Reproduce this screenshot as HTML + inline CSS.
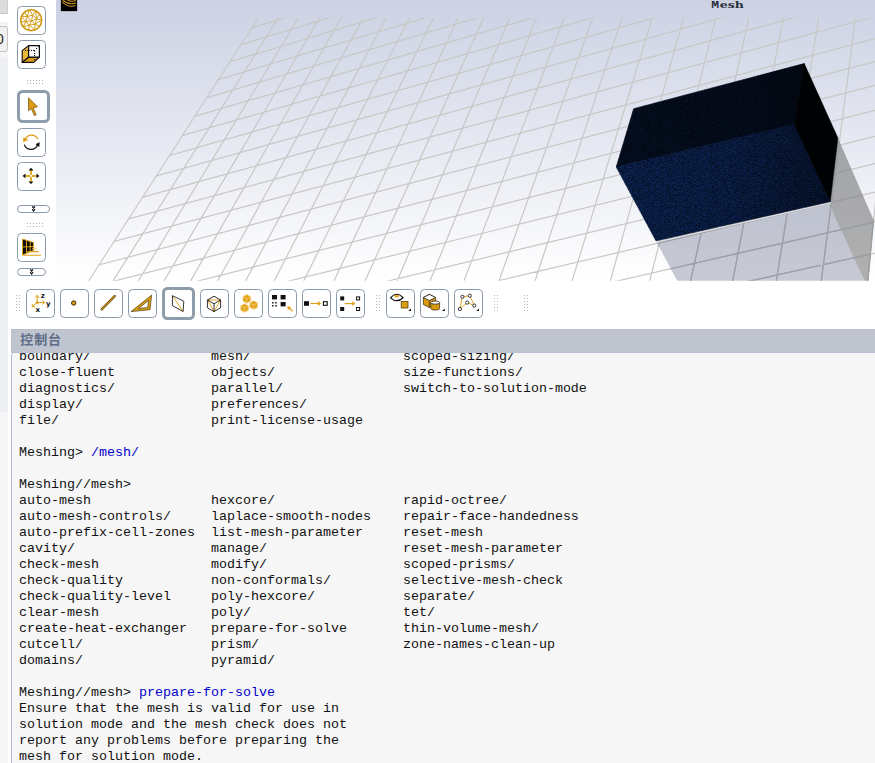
<!DOCTYPE html>
<html lang="zh">
<head>
<meta charset="utf-8">
<title>Fluent Meshing</title>
<style>
html,body{margin:0;padding:0;background:#fff;}
body{width:875px;height:763px;overflow:hidden;position:relative;font-family:"Liberation Sans","Noto Sans CJK SC",sans-serif;}
#top{position:absolute;left:0;top:0;width:875px;height:329px;display:block;}
#strip{position:absolute;left:0;top:0;width:8px;height:412px;background:#eeeff2;}
#strip .a{position:absolute;left:0;top:0;width:7px;height:13px;background:#dcdcdc;border-right:1px solid #cfcfcf;border-bottom:1px solid #c6c6c6;}
#strip .b{position:absolute;left:0;top:14px;width:8px;height:8px;background:#fff;}
#strip .c{position:absolute;left:0;top:22px;width:8px;height:35px;background:#f4f4f4;}
#strip .d{position:absolute;left:-6px;top:26px;width:12px;height:24px;border:1px solid #c4c4c4;border-radius:3px;background:#f1f1f1;font-size:15px;line-height:23px;color:#333;overflow:hidden;text-indent:0.6px;}
#conhead{position:absolute;left:11px;top:329px;width:864px;height:24px;box-sizing:border-box;border-top:1px solid #babfca;border-bottom:1px solid #b8c2d2;background:#c0c4ce;color:#5d6d87;font-weight:bold;font-size:13px;letter-spacing:0.9px;line-height:23px;font-family:"Liberation Sans","Noto Sans CJK SC",sans-serif;}
#conhead span{position:absolute;left:9.3px;top:-2px;}
#conbody{position:absolute;left:11px;top:353px;width:864px;height:410px;background:#f6f6f6;overflow:hidden;border-left:1px solid #b0bccc;box-sizing:border-box;border-top-left-radius:3px;}
#conbody pre{position:absolute;left:7px;top:-4px;margin:0;font-family:"Liberation Mono","Noto Sans CJK SC",monospace;font-size:13.333px;line-height:16px;color:#111;white-space:pre;}
#conbody pre b{font-weight:normal;color:#0000cd;}
</style>
</head>
<body>
<div style="position:absolute;left:0;top:412px;width:8px;height:351px;background:#f6f6f6"></div>
<div id="strip"><div class="a"></div><div class="b"></div><div class="c"></div><div class="d">0</div></div>
<svg id="top" width="875" height="329" viewBox="0 0 875 329">
<defs>
<linearGradient id="bg" x1="0" y1="0" x2="0" y2="1"><stop offset="0" stop-color="#ccd2e4"/><stop offset="1" stop-color="#ffffff"/></linearGradient>
<clipPath id="gclip"><polygon points="257.4,17.8 875,17.8 875,281.5 87.4,281.5"/></clipPath>
<clipPath id="sclip"><polygon points="656,240.8 676.1,281 868.5,281 873.9,220.6 837.9,138.1 830.3,201.5"/></clipPath>
<clipPath id="vclip"><rect x="56" y="0" width="819" height="280.7"/></clipPath>
<filter id="nz" x="0" y="0" width="1" height="1" color-interpolation-filters="sRGB">
<feTurbulence type="fractalNoise" baseFrequency="1.2" numOctaves="2" seed="7" result="n"/>
<feColorMatrix in="n" type="matrix" values="0 0 0 0 0  0 0 0 0 0  0 0 0 0 0  1.6 0 0 0 -0.48" result="a"/>
<feComposite in="a" in2="SourceGraphic" operator="in" result="b"/>
<feMerge><feMergeNode in="SourceGraphic"/><feMergeNode in="b"/></feMerge>
</filter>
<linearGradient id="dk" gradientUnits="userSpaceOnUse" x1="616" y1="0" x2="835" y2="0"><stop offset="0" stop-color="#000" stop-opacity="0"/><stop offset="0.55" stop-color="#000" stop-opacity="0.1"/><stop offset="1" stop-color="#000" stop-opacity="0.45"/></linearGradient>
</defs>
<g clip-path="url(#vclip)">
<rect x="56" y="0" width="819" height="281" fill="url(#bg)"/>
<g clip-path="url(#gclip)"><path d="M260.1 14.8L86.3 284.5M280.1 14.8L110.9 284.5M300.5 14.8L136.1 284.5M321.5 14.8L161.9 284.5M343.0 14.8L188.5 284.5M365.1 14.8L215.7 284.5M387.8 14.8L243.7 284.5M411.1 14.8L272.4 284.5M435.1 14.8L302.0 284.5M459.7 14.8L332.3 284.5M485.0 14.8L363.5 284.5M511.0 14.8L395.6 284.5M537.8 14.8L428.6 284.5M565.4 14.8L462.6 284.5M593.8 14.8L497.7 284.5M623.1 14.8L533.8 284.5M653.2 14.8L571.0 284.5M684.4 14.8L609.3 284.5M716.5 14.8L648.9 284.5M749.6 14.8L689.8 284.5M783.9 14.8L732.0 284.5M819.3 14.8L775.7 284.5M855.9 14.8L820.8 284.5M893.7 14.8L867.5 284.5M932.9 14.8L915.8 284.5M50 90.2L880 -165.6M50 103.0L880 -150.3M50 116.1L880 -134.4M50 129.8L880 -118.0M50 143.9L880 -101.0M50 158.5L880 -83.4M50 173.7L880 -65.1M50 189.4L880 -46.2M50 205.7L880 -26.6M50 222.7L880 -6.1M50 240.3L880 15.1M50 258.6L880 37.2M50 277.7L880 60.2M50 297.6L880 84.1M50 318.3L880 109.1M50 340.0L880 135.2M50 362.6L880 162.4M50 386.3L880 190.9M50 411.0L880 220.8M50 437.0L880 252.0M50 464.2L880 284.9" fill="none" stroke="#c7c7c4" stroke-width="1.2"/></g>
<!-- shadow -->
<polygon points="656,240.8 677.3,281 864.6,281 832.4,211.7 830.3,201.5" fill="#66708a" fill-opacity="0.37"/>
<polygon points="837.9,138.1 873.9,220.6 868.5,281 864.6,281 832.4,211.7 830.3,201.5" fill="#505050" fill-opacity="0.45"/>
<g clip-path="url(#sclip)"><path d="M260.1 14.8L86.3 284.5M280.1 14.8L110.9 284.5M300.5 14.8L136.1 284.5M321.5 14.8L161.9 284.5M343.0 14.8L188.5 284.5M365.1 14.8L215.7 284.5M387.8 14.8L243.7 284.5M411.1 14.8L272.4 284.5M435.1 14.8L302.0 284.5M459.7 14.8L332.3 284.5M485.0 14.8L363.5 284.5M511.0 14.8L395.6 284.5M537.8 14.8L428.6 284.5M565.4 14.8L462.6 284.5M593.8 14.8L497.7 284.5M623.1 14.8L533.8 284.5M653.2 14.8L571.0 284.5M684.4 14.8L609.3 284.5M716.5 14.8L648.9 284.5M749.6 14.8L689.8 284.5M783.9 14.8L732.0 284.5M819.3 14.8L775.7 284.5M855.9 14.8L820.8 284.5M893.7 14.8L867.5 284.5M932.9 14.8L915.8 284.5M50 90.2L880 -165.6M50 103.0L880 -150.3M50 116.1L880 -134.4M50 129.8L880 -118.0M50 143.9L880 -101.0M50 158.5L880 -83.4M50 173.7L880 -65.1M50 189.4L880 -46.2M50 205.7L880 -26.6M50 222.7L880 -6.1M50 240.3L880 15.1M50 258.6L880 37.2M50 277.7L880 60.2M50 297.6L880 84.1M50 318.3L880 109.1M50 340.0L880 135.2M50 362.6L880 162.4M50 386.3L880 190.9M50 411.0L880 220.8M50 437.0L880 252.0M50 464.2L880 284.9" fill="none" stroke="#9c9fa4" stroke-width="1.2"/></g>
<path d="M656.6 242L830.9 202.7" stroke="#dcdcdc" stroke-width="1.3" fill="none"/>
<!-- box -->
<polygon points="633.7,108.7 804.2,63.6 794.1,124.3 616.3,167" fill="#061229" stroke="#061229" stroke-width="0.6" filter="url(#nz)"/>
<polygon points="616.3,167 794.1,124.3 830.3,201.5 656,240.8" fill="#0e2960" stroke="#0a1f4a" stroke-width="0.6" filter="url(#nz)"/>
<polygon points="633.7,108.7 804.2,63.6 794.1,124.3 830.3,201.5 656,240.8 616.3,167" fill="url(#dk)"/>
<polygon points="804.2,63.6 837.9,138.1 830.3,201.5 794.1,124.3" fill="#000103" stroke="#000103" stroke-width="0.6"/>
<!-- logo -->
<rect x="60.5" y="-0.5" width="17" height="12" fill="#000" stroke="#e4e8f4" stroke-opacity="0.6" stroke-width="1"/>
<path d="M62 1.5C66 6 70 7.5 75.5 5.5M62.5 -0.5C66 3.5 70 5 76 3M66 -1C69 1.5 72 2 76 0.5" fill="none" stroke="#c8921a" stroke-width="1.1"/>
<text transform="translate(711.2,7.5) scale(1.25,1)" font-weight="bold" fill="#2a2f3a"><tspan font-family="'Liberation Mono',monospace" font-size="10.5">M</tspan><tspan font-family="'DejaVu Serif','Liberation Serif',serif" font-size="10" x="6.8 13.2 18.8">esh</tspan></text>
</g>
<!-- left toolbar -->
<g fill="#fff" stroke="#8b9aaa" stroke-width="1">
<rect x="17.5" y="6.5" width="28" height="28" rx="4"/>
<rect x="17.5" y="40.5" width="28" height="28" rx="4"/>
<rect x="17.5" y="128.5" width="28" height="28" rx="4"/>
<rect x="17.5" y="162.5" width="28" height="28" rx="4"/>
<rect x="17.5" y="233.5" width="28" height="28" rx="4"/>
<rect x="17.5" y="205.5" width="32" height="7" rx="3.5"/>
<rect x="17.5" y="268.5" width="28" height="7" rx="3.5"/>
</g>
<rect x="18.5" y="91.5" width="30" height="30" rx="4" fill="#fff" stroke="#8f9dab" stroke-width="3"/>
<g fill="#b4b4b4">
<path d="M27 80h1v1h-1zM30 80h1v1h-1zM33 80h1v1h-1zM36 80h1v1h-1zM39 80h1v1h-1zM42 80h1v1h-1zM27 83h1v1h-1zM30 83h1v1h-1zM33 83h1v1h-1zM36 83h1v1h-1zM39 83h1v1h-1zM42 83h1v1h-1z"/>
<path d="M27 223h1v1h-1zM30 223h1v1h-1zM33 223h1v1h-1zM36 223h1v1h-1zM39 223h1v1h-1zM42 223h1v1h-1zM27 226h1v1h-1zM30 226h1v1h-1zM33 226h1v1h-1zM36 226h1v1h-1zM39 226h1v1h-1zM42 226h1v1h-1z"/>
</g>
<!-- sphere icon -->
<g fill="none" stroke="#d19a14" stroke-linejoin="round">
<circle cx="31.2" cy="20.2" r="10.4" stroke-width="1.6"/>
<path stroke-width="0.95" d="M31.6 21L36.6 18.9M31.6 21L32.6 15.2M31.6 21L27.2 16.5M31.6 21L25.8 21.5M31.6 21L29.3 25.1M31.6 21L34.8 24.2M36.6 18.9L32.6 15.2L27.2 16.5L25.8 21.5L29.3 25.1L34.8 24.2ZM36.6 18.9L39.6 14.3M36.6 18.9L41.5 20.2M36.6 18.9L35.6 10.9M32.6 15.2L35.6 10.9M32.6 15.2L29.4 10.1M27.2 16.5L29.4 10.1M27.2 16.5L24.6 12.3M27.2 16.5L21.5 16.7M25.8 21.5L21.5 16.7M25.8 21.5L21.1 22.0M25.8 21.5L23.3 26.8M29.3 25.1L23.3 26.8M29.3 25.1L28.5 30.1M29.3 25.1L34.7 29.9M34.8 24.2L34.7 29.9M34.8 24.2L39.6 26.1M34.8 24.2L41.5 20.2"/>
</g>
<!-- cube icon -->
<g stroke="#0a0a12" stroke-width="1.1" stroke-linejoin="round">
<polygon points="28.6,45.6 22.2,50.6 22.2,62.4 28.6,57.2" fill="#e8b535"/>
<polygon points="28.6,57.2 39.4,57.2 33.8,62.4 22.2,62.4" fill="#d99b12"/>
<rect x="28.6" y="45.6" width="10.8" height="11.5" fill="#fff" stroke-width="1.2"/>
<path d="M22.6 62L28.4 57.4" fill="none" stroke-dasharray="1.2 1" stroke-width="0.9"/>
</g>
<g fill="#0a0a12">
<rect x="24.9" y="49.9" width="1.1" height="1.1"/><rect x="27.3" y="49.9" width="2.4" height="1.1"/><rect x="31" y="49.9" width="1.1" height="1.1"/>
<path d="M33.2 49.9H34.6Q35.1 50 35.1 50.6V51.6H34V51H33.2Z"/>
<rect x="34" y="53" width="1.1" height="1.1"/><rect x="34" y="55" width="1.1" height="1.1"/><rect x="34" y="59" width="1.1" height="1.1"/>
<rect x="36" y="47.9" width="1.1" height="1.1"/>
<path d="M37.6 46.2H38.9V47.5Z"/>
</g>
<!-- arrow cursor icon -->
<path d="M28.5 97.8V110.8L31.3 108.6L34.3 115.6L36.2 114.8L33.2 107.9L37.5 106.7Z" fill="#dc9c12" stroke="#6e5210" stroke-width="0.7" stroke-linejoin="round"/>
<!-- rotate icon -->
<g fill="none" stroke-width="1.3" stroke-linecap="round">
<path d="M37.6 138.6A7 7 0 0 0 25 139.6" stroke="#dc9c12"/>
<path d="M23.4 141.6L23.6 137.6L27.6 139.9Z" stroke="#dc9c12" fill="#dc9c12" stroke-width="0.5" stroke-linejoin="round"/>
<path d="M24.5 145.2A7.2 7.2 0 0 0 37.6 145" stroke="#111"/>
<path d="M39.2 142.7L35.9 144.3L38.9 146.5Z" stroke="#111" fill="#111" stroke-width="0.5" stroke-linejoin="round"/>
</g>
<!-- pan icon -->
<path d="M25 175.9H37M31 170V181.8" stroke="#e2ad2c" stroke-width="2" fill="none"/>
<rect x="30.1" y="175" width="1.8" height="1.8" fill="#fff"/>
<path d="M31 167.7L33.5 170.4H28.5ZM31 184.1L33.5 181.4H28.5ZM22.6 175.9L25.4 173.5V178.3ZM39.4 175.9L36.6 173.5V178.3Z" fill="#111"/>
<!-- chevrons -->
<g fill="none" stroke="#111" stroke-width="1.2">
<path d="M32.2 206.3L33.6 208L35 206.3M32.2 209.2L33.6 211L35 209.2"/>
<path d="M30.2 269.3L31.6 271L33 269.3M30.2 272.2L31.6 274L33 272.2"/>
</g>
<!-- perspective grid icon -->
<polygon points="22.5,239 33.5,242.5 33.5,250.5 22.5,255" fill="#0b0b0b"/>
<g fill="none" stroke="#dfa21a" stroke-width="1">
<path d="M22.5 239L33.5 242.5V250.5L22.5 255ZM22.5 247L33.5 246.5M26.5 240.3V253.3M30.2 241.5V251.8"/>
<path d="M22.5 255.3H41M27.5 251.6H38.8" stroke-width="1.1"/><path d="M32 248.8H36.8" stroke-width="1" stroke="#e8c46a"/>
<path d="M33.5 246.6H35.5" stroke-width="0.9" stroke="#efd595"/>
</g>
<!-- bottom toolbar -->
<g fill="#fff" stroke="#8b9aaa" stroke-width="1">
<rect x="26.5" y="289.5" width="28" height="28" rx="4"/>
<rect x="60.5" y="289.5" width="28" height="28" rx="4"/>
<rect x="94.5" y="289.5" width="28" height="28" rx="4"/>
<rect x="128.5" y="289.5" width="28" height="28" rx="4"/>
<rect x="200.5" y="289.5" width="28" height="28" rx="4"/>
<rect x="234.5" y="289.5" width="28" height="28" rx="4"/>
<rect x="268.5" y="289.5" width="28" height="28" rx="4"/>
<rect x="302.5" y="289.5" width="28" height="28" rx="4"/>
<rect x="336.5" y="289.5" width="28" height="28" rx="4"/>
<rect x="386.5" y="289.5" width="28" height="28" rx="4"/>
<rect x="420.5" y="289.5" width="28" height="28" rx="4"/>
<rect x="454.5" y="289.5" width="28" height="28" rx="4"/>
</g>
<rect x="163.5" y="288.5" width="30" height="30" rx="4" fill="#fff" stroke="#8f9dab" stroke-width="3"/>
<g fill="#b8b8b8" id="grips">
<path id="grip" d="M16 295h1v1h-1zM19 295h1v1h-1zM16 298h1v1h-1zM19 298h1v1h-1zM16 301h1v1h-1zM19 301h1v1h-1zM16 304h1v1h-1zM19 304h1v1h-1zM16 307h1v1h-1zM19 307h1v1h-1zM16 310h1v1h-1zM19 310h1v1h-1z"/>
<use href="#grip" x="360"/><use href="#grip" x="478"/><use href="#grip" x="508"/>
</g>
<!-- axes icon -->
<g fill="none" stroke="#dfa21a" stroke-width="1" stroke-linecap="round" stroke-linejoin="round">
<path d="M37.2 302.5V295.5M35.3 297.5L37.2 295.3L39.1 297.5M37.2 302.5H44.5M42.6 300.7L44.7 302.5L42.6 304.3M37.2 302.5L32.3 306.7M32.3 304.3V306.8H34.8"/>
</g>
<circle cx="37.2" cy="302.5" r="1.5" fill="#dfa21a"/>
<g font-family="'DejaVu Sans','Liberation Sans',sans-serif" font-weight="bold" font-size="7" fill="#111">
<text x="40.8" y="298">z</text><text x="46" y="305.6">y</text><text x="35.6" y="311.8">x</text>
</g>
<!-- point icon -->
<circle cx="73.7" cy="303" r="2.2" fill="#e0a012" stroke="#3d2f0a" stroke-width="1"/>
<!-- line icon -->
<path d="M101.7 309.3L114.7 296.2" stroke="#5a4410" stroke-width="2.4" stroke-linecap="round"/>
<path d="M101.7 309.3L114.7 296.2" stroke="#dba01c" stroke-width="1.1" stroke-linecap="round"/>
<!-- triangle icon -->
<path d="M131 311.6L151.6 295.1L150 309.7ZM138.6 308.5L147.7 307.6L148.5 300.4Z" fill="#d89c14" fill-rule="evenodd" stroke="#4e3c0e" stroke-width="0.7" stroke-linejoin="round"/>
<!-- face icon -->
<path d="M172.4 295.7L183.1 311.5" stroke="#e0a82a" stroke-width="1"/>
<path d="M172.4 295.7L183.8 301.2L183.1 311.5L172.4 305.6Z" fill="none" stroke="#222" stroke-width="0.9" stroke-linejoin="round"/>
<!-- cube wire icon -->
<path d="M207.6 300L220.6 300M207.6 300L214 311.6M220.6 300L214 311.6" fill="none" stroke="#e0a82a" stroke-width="1"/>
<path d="M214 296.2L220.6 300V307.8L214 311.6L207.4 307.8V300ZM214 303.8V311.6M214 303.8L207.4 300M214 303.8L220.6 300" fill="none" stroke="#1a1a1a" stroke-width="0.9" stroke-linejoin="round"/>
<!-- three cubes -->
<g id="cb" stroke="#f3cf7a" stroke-width="0.7" stroke-linejoin="round" fill="#e4a51c">
<path d="M246.8 294.6L250.6 296.7V301.1L246.8 303.2L243 301.1V296.7Z"/>
<path d="M243 296.7L246.8 298.8L250.6 296.7M246.8 298.8V303.2" fill="none"/>
</g>
<use href="#cb" x="6.9" y="6.2"/><use href="#cb" x="-2.2" y="9.1"/>
<!-- select icon -->
<g fill="#111">
<rect x="272" y="295" width="5" height="4.4"/><rect x="280.6" y="295" width="5" height="4.4"/><rect x="280.6" y="302" width="5" height="4.4"/>
<path d="M272 302h1.6v1.4h-1.6zM275.2 302h1.6v1.4h-1.6zM272 305h1.6v1.4h-1.6zM275.2 305h1.6v1.4h-1.6z" fill="#222"/>
</g>
<path d="M292.6 311.3L289 307.8" fill="none" stroke="#dfa21a" stroke-width="1.2"/><path d="M287.2 306.2L291.2 306.9L287.9 310.2Z" fill="#dfa21a"/>
<!-- arrow icon -->
<rect x="304" y="301.2" width="5" height="4.6" fill="#111"/>
<rect x="323.4" y="301.7" width="3.8" height="3.6" fill="#fff" stroke="#111" stroke-width="1.1"/>
<path d="M310.3 303.5H319" fill="none" stroke="#dfa21a" stroke-width="1.2"/><path d="M318 301.1L321.2 303.5L318 305.9Z" fill="#dfa21a"/>
<!-- multi arrow icon -->
<rect x="340.2" y="296.4" width="4" height="4" fill="#111"/><rect x="340.2" y="307" width="4" height="4" fill="#111"/>
<rect x="356.6" y="296.9" width="3" height="3" fill="#fff" stroke="#111" stroke-width="1"/><rect x="356.6" y="307.5" width="3" height="3" fill="#fff" stroke="#111" stroke-width="1"/>
<path d="M344.8 303.6H353" fill="none" stroke="#dfa21a" stroke-width="1.2"/><path d="M352.2 301.3L355.3 303.6L352.2 305.9Z" fill="#dfa21a"/>
<!-- eye icon -->
<path d="M390.5 297.8Q396.8 290.6 403.2 297.8Q396.8 303.6 390.5 297.8Z" fill="#fff" stroke="#111" stroke-width="1.15" stroke-linejoin="round"/>
<path d="M394.4 295.6A2.5 2.6 0 0 0 399.2 295.6Q396.8 294.2 394.4 295.6Z" fill="#dfa21a" stroke="#dfa21a" stroke-width="0.4"/>
<rect x="401.2" y="301.4" width="6.8" height="6.6" fill="#dc9c12" stroke="#5a4410" stroke-width="0.8"/>
<path d="M411 308.4V311H408.2Z" fill="#111"/>
<!-- cube cyl icon -->
<path d="M423.4 297.5L429.4 294.4L435.6 297.5V304.5L429.4 307.6L423.4 304.5Z" fill="#d99a12" stroke="#4a3a10" stroke-width="0.8" stroke-linejoin="round"/>
<path d="M423.4 297.5L429.4 294.4L435.6 297.5L429.4 300.6Z" fill="#fff" stroke="#222" stroke-width="0.8" stroke-linejoin="round"/>
<path d="M429.4 300.6V307.6" stroke="#4a3a10" stroke-width="0.8"/>
<path d="M430.8 302.6V308.4A4.4 1.7 0 0 0 439.6 308.4V302.6Z" fill="#d99a12" stroke="#4a3a10" stroke-width="0.8"/>
<ellipse cx="435.2" cy="302.6" rx="4.4" ry="1.6" fill="#fff" stroke="#222" stroke-width="0.8"/>
<path d="M444.8 308.4V311H442Z" fill="#111"/>
<!-- polyline icon -->
<path d="M459.9 309L462.4 296.8L469.8 295.7L474.3 305.6L467.2 302.6Z" fill="none" stroke="#e0a82a" stroke-width="1"/>
<g fill="#fff" stroke="#222" stroke-width="0.9">
<circle cx="459.9" cy="309" r="1.6"/><circle cx="462.4" cy="296.8" r="1.6"/><circle cx="469.8" cy="295.7" r="1.6"/><circle cx="474.3" cy="305.6" r="1.6"/><circle cx="467.2" cy="302.6" r="1.6"/>
</g>
<path d="M479 308.4V311H476.2Z" fill="#111"/>
</svg>
<div id="conhead"><span>控制台</span></div>
<div id="conbody"><pre>boundary/               mesh/                   scoped-sizing/
close-fluent            objects/                size-functions/
diagnostics/            parallel/               switch-to-solution-mode
display/                preferences/
file/                   print-license-usage

Meshing&gt; <b>/mesh/</b>

Meshing//mesh&gt;
auto-mesh               hexcore/                rapid-octree/
auto-mesh-controls/     laplace-smooth-nodes    repair-face-handedness
auto-prefix-cell-zones  list-mesh-parameter     reset-mesh
cavity/                 manage/                 reset-mesh-parameter
check-mesh              modify/                 scoped-prisms/
check-quality           non-conformals/         selective-mesh-check
check-quality-level     poly-hexcore/           separate/
clear-mesh              poly/                   tet/
create-heat-exchanger   prepare-for-solve       thin-volume-mesh/
cutcell/                prism/                  zone-names-clean-up
domains/                pyramid/

Meshing//mesh&gt; <b>prepare-for-solve</b>
Ensure that the mesh is valid for use in
solution mode and the mesh check does not
report any problems before preparing the
mesh for solution mode.
</pre></div>
</body>
</html>
